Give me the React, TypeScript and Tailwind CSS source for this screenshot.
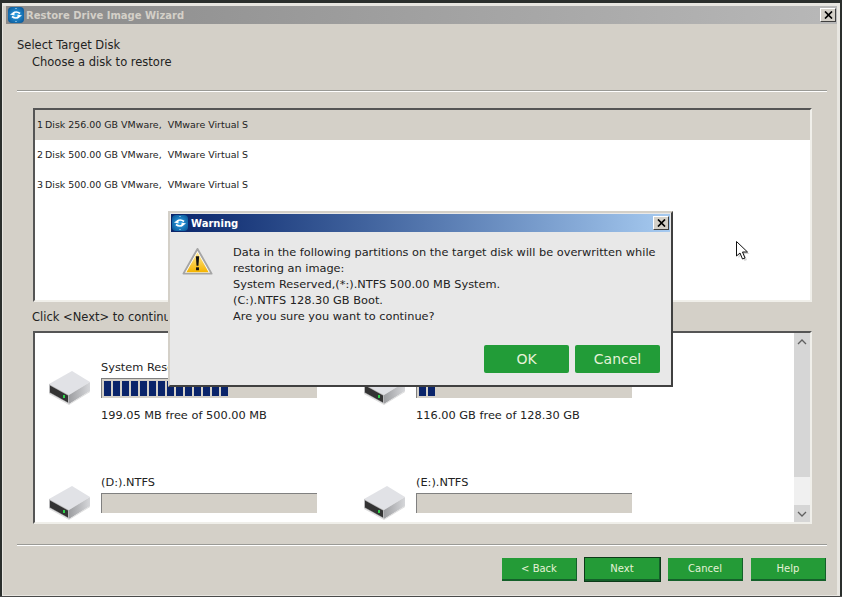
const font = "font-['DejaVu_Sans','Noto_Sans',sans-serif]";

function AppLogo({ id }: { id: string }) {
  return (
    <svg width="16" height="16" viewBox="0 0 16 16" className="shrink-0">
      <defs>
        <radialGradient id={id} cx="0.5" cy="0.5" r="0.7">
          <stop offset="0" stopColor="#2fa4ea" />
          <stop offset="1" stopColor="#07508f" />
        </radialGradient>
      </defs>
      <rect width="16" height="16" rx="4" fill={`url(#${id})`} />
      <path d="M5 6.500C6.500 4.500 9.500 4.500 12 6.500" fill="none" stroke="#fff" strokeWidth="1.700" />
      <path d="M11 9.500C9.500 11.500 6.500 11.500 4 9.500" fill="none" stroke="#fff" strokeWidth="1.700" />
      <path d="M2 7.500 6.500 4.500V8.500zM14 8.500 9.500 11.500V7.500z" fill="#fff" />
      <rect x="7.500" y="1" width="1" height="1" fill="#cfeaff" />
      <rect x="7.500" y="14" width="1" height="1" fill="#cfeaff" />
    </svg>
  );
}

function CloseButton() {
  return (
    <div className="flex h-[14px] w-[16px] shrink-0 items-center justify-center border border-t-white border-l-white border-r-[#404040] border-b-[#404040] bg-[#d4d0c8]">
      <svg width="9" height="8" viewBox="0 0 9 8">
        <path d="M1 0.5 8 7.500M8 0.500 1 7.500" stroke="#000" strokeWidth="1.700" fill="none" />
      </svg>
    </div>
  );
}

function DriveIcon() {
  return (
    <svg width="42" height="34" viewBox="0 0 42 34" className="shrink-0">
      <defs>
        <linearGradient id="driveSide" x1="0" y1="0" x2="1" y2="0">
          <stop offset="0" stopColor="#9d9ea1" />
          <stop offset="1" stopColor="#d6d7da" />
        </linearGradient>
      </defs>
      <path d="M0 13 23 0 41 11 20 24z" fill="#e1e2e6" />
      <path d="M0 13 20 24V33L0 22z" fill="#b9b9bb" />
      <path d="M1 14.500 19 24.500V31.500L1 21.500z" fill="#333" />
      <path d="M20 24 41 11V20L20 33z" fill="url(#driveSide)" />
      <path d="M0 22 20 33 41 20V21L20 34 0 23z" fill="#dcdcdc" />
      <rect x="14" y="24" width="2" height="3" fill="#2fd14b" />
    </svg>
  );
}

function WarningIcon() {
  return (
    <svg width="31" height="29" viewBox="0 0 32 29" className="shrink-0">
      <defs>
        <linearGradient id="warn" x1="0" y1="0" x2="0" y2="1">
          <stop offset="0" stopColor="#ffeb99" />
          <stop offset="1" stopColor="#f5b400" />
        </linearGradient>
      </defs>
      <path d="M16 1.500 30.500 27H1.500z" fill="#fff" stroke="#a5a5a5" strokeWidth="2" strokeLinejoin="round" />
      <path d="M16 5 27.500 25.500H4.500z" fill="url(#warn)" />
      <path d="M14.300 9h3.400l-.7 10h-2z" fill="#111" />
      <rect x="14.500" y="20.500" width="3" height="3" fill="#111" />
    </svg>
  );
}

function Cursor() {
  return (
    <svg width="16" height="22" viewBox="0 0 16 22" className="absolute left-[736px] top-[241px]">
      <path d="M2.500 2.500V17l3.500-3 2.500 6 2.500-1-2.500-6h5z" fill="#bbb" opacity="0.6" />
      <path d="M.5.5V15l3.500-3 2.500 6 2.500-1-2.500-6h5z" fill="#fff" stroke="#111" strokeWidth="1" />
    </svg>
  );
}

function Drive({ name, segments, free }: { name: string; segments: number; free?: string }) {
  return (
    <div className="flex h-[115px] w-[315px] items-start">
      <div className="ml-[14px] mt-[38px] w-[52px]">
        <DriveIcon />
      </div>
      <div className="w-[216px] pt-[24px]">
        <div className="h-[21px] text-[11.35px] leading-[20px]">{name}</div>
        {segments > 0 ? (
          <div className="flex h-[20px] gap-[2px] border-l border-t border-[#808080] bg-[#d4d0c8] px-[2px] py-[2px]">
            {Array.from({ length: segments }).map((_, i) => (
              <div key={i} className="h-[15px] w-[7px] bg-[#0a246a]" />
            ))}
          </div>
        ) : (
          <div className="h-[20px] border-l border-t border-[#808080] bg-[#d4d0c8]" />
        )}
        {free && <div className="mt-[7px] text-[11.35px] leading-[20px]">{free}</div>}
      </div>
    </div>
  );
}

function GreenButton({ label, active }: { label: string; active?: boolean }) {
  return (
    <div
      className={`flex h-[23px] w-[75px] items-center justify-center border-b-2 border-r border-[#14602a] bg-[#249b37] text-[10px] text-[#e6f2d8] ${
        active ? 'outline-1 outline-[#0c3a18]' : ''
      }`}
    >
      {label}
    </div>
  );
}

function DiskRow({ n, size, selected }: { n: number; size: string; selected?: boolean }) {
  return (
    <div className={`flex h-[30px] items-center pl-[2px] text-[9.45px] ${selected ? 'bg-[#d4d0c8]' : ''}`}>
      <span className="mr-[2px]">{n}</span>
      <span className="whitespace-pre">{`Disk ${size} GB VMware,  VMware Virtual S`}</span>
    </div>
  );
}

export default function App() {
  return (
    <div className={`${font} relative h-[597px] w-[842px] overflow-hidden bg-[#2b2f2d] text-[#222]`}>
      {/* main wizard window */}
      <div className="ml-[2px] mr-[2px] mt-[3px] flex h-[593px] flex-col border border-t-[3px] border-r-[3px] border-[#e8e6e1] bg-[#d4d0c8]">
        <div className="ml-[3px] flex h-[18px] shrink-0 items-center gap-[2px] bg-gradient-to-r from-[#8a8a8a] to-[#b8b8b8] pl-[2px] pr-[1px]">
          <AppLogo id="mainLogo" />
          <span className="flex-1 text-[10px] font-bold text-[#d4d0c8]">Restore Drive Image Wizard</span>
          <CloseButton />
        </div>

        <div className="pl-[14px] pt-[13px] text-[11.5px] leading-[17px]">
          <div>Select Target Disk</div>
          <div className="pl-[15px]">Choose a disk to restore</div>
        </div>

        <div className="mx-[14px] mt-[19px] h-[2px] w-[810px] border-t border-b border-t-[#9a9a96] border-b-white" />

        {/* disk list */}
        <div className="ml-[30px] mt-[16px] h-[194px] w-[779px] border-2 border-t-[#555] border-l-[#555] border-r-[#f0efea] border-b-[#f0efea] bg-white">
          <DiskRow n={1} size="256.00" selected />
          <DiskRow n={2} size="500.00" />
          <DiskRow n={3} size="500.00" />
        </div>

        <div className="ml-[29px] mt-[7px] h-[22px] text-[11.5px] leading-[17px]">Click &lt;Next&gt; to continue</div>

        {/* partition list */}
        <div className="ml-[30px] flex h-[193px] w-[779px] border-2 border-t-[#555] border-l-[#555] border-r-[#f0efea] border-b-[#f0efea] bg-white">
          <div className="flex-1 overflow-hidden">
            <div className="grid grid-cols-[315px_315px]">
              <Drive name="System Reserved,(*:).NTFS" segments={14} free="199.05 MB free of 500.00 MB" />
              <Drive name="(C:).NTFS" segments={2} free="116.00 GB free of 128.30 GB" />
              <Drive name="(D:).NTFS" segments={0} />
              <Drive name="(E:).NTFS" segments={0} />
            </div>
          </div>
          <div className="flex w-[16px] shrink-0 flex-col items-center bg-[#d6d6d6]">
            <div className="flex h-[17px] items-center justify-center">
              <svg width="10" height="6" viewBox="0 0 10 6"><path d="M1 5 5 1l4 4" fill="none" stroke="#606060" strokeWidth="1.300" /></svg>
            </div>
            <div className="flex-1" />
            <div className="h-[28px] w-full bg-[#f0f0f0]" />
            <div className="flex h-[17px] w-full items-center justify-center">
              <svg width="10" height="6" viewBox="0 0 10 6"><path d="M1 1l4 4 4-4" fill="none" stroke="#606060" strokeWidth="1.300" /></svg>
            </div>
          </div>
        </div>

        <div className="mx-[14px] mt-[20px] h-[2px] w-[810px] border-t border-b border-t-[#9a9a96] border-b-white" />

        <div className="ml-[499px] mt-[12px] flex gap-[8px]">
          <GreenButton label="< Back" />
          <GreenButton label="Next" active />
          <GreenButton label="Cancel" />
          <GreenButton label="Help" />
        </div>
      </div>
      <div className="absolute bottom-0 left-0 h-[1px] w-full bg-[#4a4a4a]" />

      {/* warning dialog */}
      <div className="absolute left-[168px] top-[211px] flex h-[176px] w-[505px] flex-col border-2 border-t-[#d4d0c8] border-l-[#d4d0c8] border-r-[#404040] border-b-[#404040] bg-[#e8e8e8] p-px">
        <div className="flex h-[18px] shrink-0 items-center gap-[3px] bg-gradient-to-r from-[#0a246a] to-[#a6caf0] pl-[1px] pr-[1px]">
          <AppLogo id="warnLogo" />
          <span className="flex-1 pt-px text-[10px] font-bold text-white">Warning</span>
          <CloseButton />
        </div>
        <div className="flex pl-[11px] pt-[12px]">
          <div className="mt-[3px] w-[51px]">
            <WarningIcon />
          </div>
          <div className="text-[11.35px] leading-[16px]">
            <div>Data in the following partitions on the target disk will be overwritten while</div>
            <div>restoring an image:</div>
            <div>System Reserved,(*:).NTFS 500.00 MB System.</div>
            <div>(C:).NTFS 128.30 GB Boot.</div>
            <div>Are you sure you want to continue?</div>
          </div>
        </div>
        <div className="mr-[10px] mt-[21px] flex justify-end gap-[6px]">
          <div className="flex h-[28px] w-[85px] items-center justify-center rounded-[2px] bg-[#229c38] pt-px text-[14px] text-[#e6f2d8]">OK</div>
          <div className="flex h-[28px] w-[85px] items-center justify-center rounded-[2px] bg-[#229c38] pt-px text-[14px] text-[#e6f2d8]">Cancel</div>
        </div>
      </div>

      <Cursor />
    </div>
  );
}
